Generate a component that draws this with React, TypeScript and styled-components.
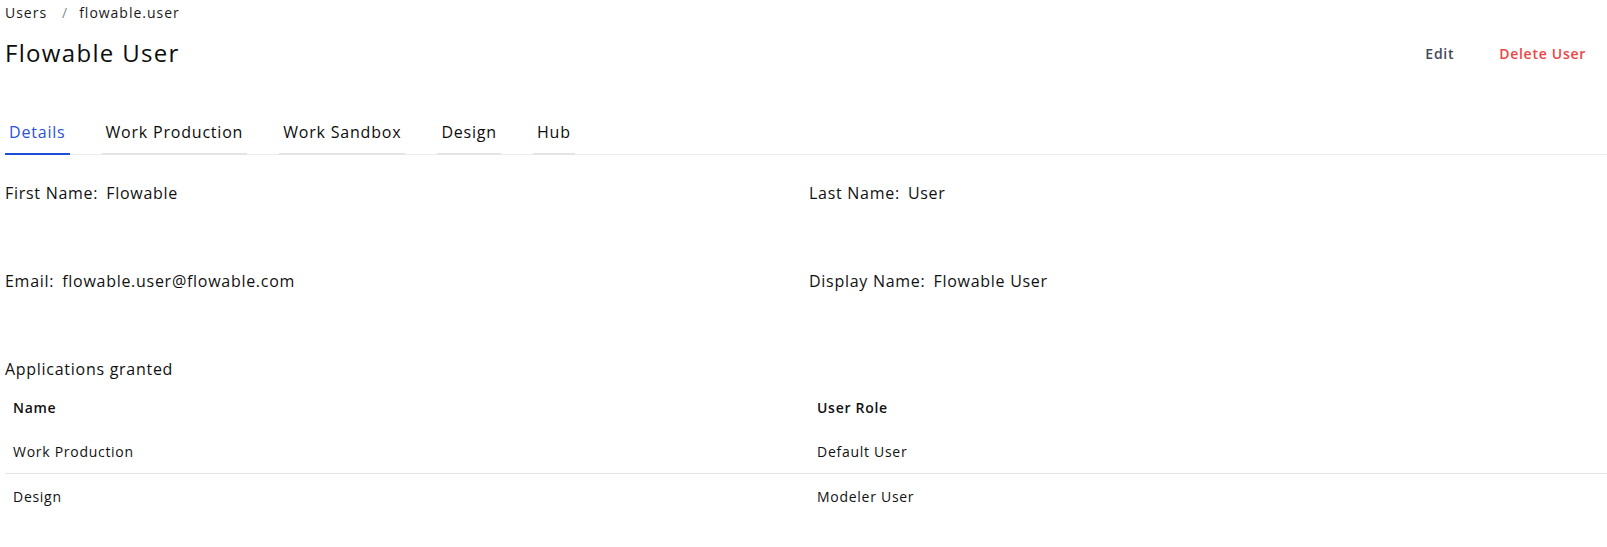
import React from "react";
import styled, {createGlobalStyle} from "styled-components";

const GlobalStyle = createGlobalStyle`
  html, body {
    margin: 0;
    padding: 0;
    background: #ffffff;
  }
  body {
    font-family: "Open Sans", "Liberation Sans", sans-serif;
    letter-spacing: 0.045em;
    color: #111111;
  }
`;

const Page = styled.div`
  padding: 3px 0 0 5px;
`;

const Breadcrumb = styled.div`
  display: flex;
  align-items: center;
  font-size: 14px;
  line-height: 20px;
  letter-spacing: 0.07em;
  color: #1a1a1a;
`;

const Separator = styled.span`
  color: #8a8a8a;
  margin: 0 11px 0 15px;
`;

const Header = styled.div`
  display: flex;
  align-items: center;
  justify-content: space-between;
  margin-top: 14px;
  height: 32px;
`;

const Title = styled.h1`
  margin: 0;
  font-size: 24px;
  line-height: 32px;
  font-weight: 400;
  letter-spacing: 0.055em;
  color: #0d0d0d;
`;

const Actions = styled.div`
  display: flex;
  align-items: center;
  gap: 45px;
  padding-right: 21px;
`;

const ActionButton = styled.button<{ $danger?: boolean }>`
  border: none;
  background: none;
  padding: 0;
  font-family: inherit;
  letter-spacing: inherit;
  font-size: 14px;
  font-weight: 600;
  color: ${(p) => (p.$danger ? "#ef4444" : "#3f4a5a")};
  cursor: pointer;
`;

const TabBar = styled.div`
  display: flex;
  gap: 32px;
  margin-top: 43px;
  border-bottom: 1px solid #ececec;
`;

const Tab = styled.div<{ $active?: boolean }>`
  padding: 8px 4px 9px;
  font-size: 16px;
  line-height: 24px;
  letter-spacing: 0.05em;
  color: ${(p) => (p.$active ? "#2c52d6" : "#0d0d0d")};
  border-bottom: 2px solid ${(p) => (p.$active ? "#1d4ed8" : "#e4e4e7")};
  margin-bottom: -1px;
`;

const Fields = styled.div`
  display: grid;
  grid-template-columns: 1fr 1fr;
  column-gap: 6px;
  row-gap: 66px;
  margin-top: 27px;
`;

const Field = styled.div`
  font-size: 16px;
  line-height: 22px;
`;

const Label = styled.span`
  font-weight: 500;
  margin-right: 8px;
`;

const SectionTitle = styled.div`
  margin-top: 66px;
  font-size: 16px;
  line-height: 22px;
`;

const Table = styled.table`
  width: 100%;
  margin-top: 5px;
  border-collapse: collapse;
  table-layout: fixed;
  font-size: 14px;
`;

const HeadCell = styled.th`
  text-align: left;
  font-weight: 600;
  height: 44px;
  padding: 0 8px;
  &:nth-child(2) {
    padding-left: 11px;
  }
`;

const Row = styled.tr`
  & + & {
    border-top: 1px solid #e5e5e5;
  }
`;

const Cell = styled.td`
  height: 44px;
  padding: 0 8px;
  &:nth-child(2) {
    padding-left: 11px;
  }
`;

const tabs = ["Details", "Work Production", "Work Sandbox", "Design", "Hub"];

const apps = [
  {name: "Work Production", role: "Default User"},
  {name: "Design", role: "Modeler User"},
];

const App = () => {
  return (
    <Page>
      <GlobalStyle/>
      <Breadcrumb>
        <span>Users</span>
        <Separator>/</Separator>
        <span>flowable.user</span>
      </Breadcrumb>
      <Header>
        <Title>Flowable User</Title>
        <Actions>
          <ActionButton>Edit</ActionButton>
          <ActionButton $danger>Delete User</ActionButton>
        </Actions>
      </Header>
      <TabBar>
        {tabs.map((t, i) => (
          <Tab key={t} $active={i === 0}>{t}</Tab>
        ))}
      </TabBar>
      <Fields>
        <Field><Label>First Name:</Label>Flowable</Field>
        <Field><Label>Last Name:</Label>User</Field>
        <Field><Label>Email:</Label>flowable.user@flowable.com</Field>
        <Field><Label>Display Name:</Label>Flowable User</Field>
      </Fields>
      <SectionTitle>Applications granted</SectionTitle>
      <Table>
        <thead>
          <tr>
            <HeadCell>Name</HeadCell>
            <HeadCell>User Role</HeadCell>
          </tr>
        </thead>
        <tbody>
          {apps.map((a) => (
            <Row key={a.name}>
              <Cell>{a.name}</Cell>
              <Cell>{a.role}</Cell>
            </Row>
          ))}
        </tbody>
      </Table>
    </Page>
  );
};

export default App;
